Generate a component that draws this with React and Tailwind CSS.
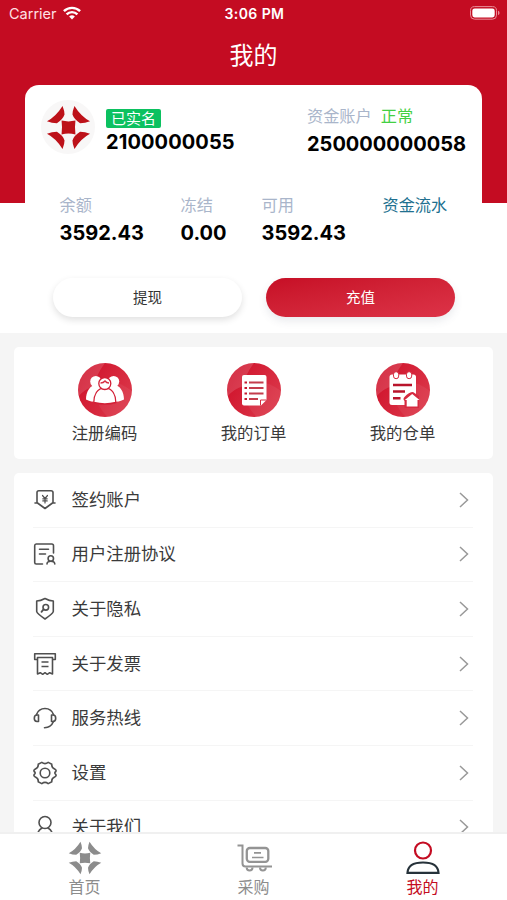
import React from 'react';

const PETAL = 'M-18-65Q-12-50-12-39Q-17-24-35-13Q-50-13-65-19Q-38-33-18-65Z';

function Logo({ className }) {
  return (
    <svg viewBox="-68 -68 136 136" className={className} fill="currentColor">
      <path d={PETAL} />
      <path d={PETAL} transform="scale(-1 1)" />
      <path d={PETAL} transform="scale(1 -1)" />
      <path d={PETAL} transform="scale(-1 -1)" />
      <path d="M-21-21Q0-16 21-21Q18 0 21 21Q0 16-21 21Q-18 0-21-21Z" />
    </svg>
  );
}

function StatusBar() {
  return (
    <div className="grid h-7 grid-cols-3 items-center pl-[9px] pr-[7px] text-[14.5px] text-white">
      <div className="flex items-center gap-[6px]">
        <span className="text-[#ffe0e4]">Carrier</span>
        <svg viewBox="0 0 18 14" className="mb-[2px] h-[14px] w-[18px]" fill="none" stroke="#fff" strokeWidth="2.4">
          <path d="M.9 5.2a11.6 11.6 0 0 1 16.2 0M3.6 8.4a7.6 7.6 0 0 1 10.8 0" />
          <path d="M6.1 10.6a4.2 4.2 0 0 1 5.8 0L9 13.6Z" fill="#fff" stroke="none" />
        </svg>
      </div>
      <span className="pb-[2px] text-center text-[14px] font-semibold tracking-[0.4px] whitespace-nowrap">3:06 PM</span>
      <svg viewBox="0 0 30 14" className="mb-[2px] h-[14px] w-[30px] justify-self-end">
        <rect x=".5" y=".6" width="26" height="12.6" rx="4" fill="none" stroke="#e88d98" />
        <rect x="2.3" y="2.4" width="22.4" height="9" rx="2.3" fill="#fff" />
        <path d="M28 4.8c2 .7 2 3.6 0 4.2Z" fill="#e88d98" />
      </svg>
    </div>
  );
}

function Balance({ label, value, className }) {
  return (
    <div className={className}>
      <div className="text-[16.2px] leading-6 text-[#a9b5ca]">{label}</div>
      <div className="mt-[2px] text-[20px] leading-7 font-bold text-black">{value}</div>
    </div>
  );
}

function Disc({ children, id }) {
  return (
    <svg viewBox="0 0 54 54" className="size-[54px]">
      <defs>
        <linearGradient id={id} x1="0" y1="0.2" x2="1" y2="0.8">
          <stop offset="0" stopColor="#cf1029" />
          <stop offset="1" stopColor="#dc3a4c" />
        </linearGradient>
        <clipPath id={id + 'c'}>
          <circle cx="27" cy="27" r="27" />
        </clipPath>
      </defs>
      <circle cx="27" cy="27" r="27" fill={`url(#${id})`} />
      <g clipPath={`url(#${id}c)`} fill="#fff">
        <path d="M0 0H27Q17 13 17 23Q6 26 0 34Z" opacity=".14" />
        <path d="M17 23Q17 43 30 54H54V28Q35 13 17 23Z" opacity=".06" />
      </g>
      {children}
    </svg>
  );
}

function PeopleIcon() {
  return (
    <Disc id="people">
      <g fill="#fff">
        <circle cx="17.8" cy="18.5" r="5.6" />
        <circle cx="35.6" cy="18.5" r="5.6" />
        <path d="M8 36.5C8 29 12 22 18 22C24 22 27 29 27 38.5C20 39.5 12 39 8 36.5ZM27 38.5C27 29 30 22 36 22C42 22 46 29 46 36.5C42 39 34 39.5 27 38.5Z" />
      </g>
      <g fill="#fff" stroke="#d31f36" strokeWidth="1.3">
        <path d="M15.800 39.500C16 32 19 25 26.800 25S37.600 32 37.800 39.500Q27 42.500 15.800 39.500Z" />
        <circle cx="26.800" cy="20.500" r="6" />
      </g>
      <path d="M22.500 20Q25.500 20 27 18Q28.500 20 31 20" fill="none" stroke="#d72f43" strokeWidth="1.300" />
    </Disc>
  );
}

function OrderIcon() {
  return (
    <Disc id="order">
      <path d="M17 12H37.5Q39.5 12 39.5 14V37L34 42.5H17Q15 42.5 15 40.5V14Q15 12 17 12Z" fill="#fff" />
      <path d="M39.5 37H33.5V42.5" fill="none" stroke="#d62b40" strokeWidth="1" />
      <path d="M17.5 19.5H20M17.5 25H20M17.5 30.5H20M17.5 36H20" stroke="#c5192f" strokeWidth="2" />
      <path d="M22 19.5H36.5M22 25H36.5M22 30.5H36.5M22 36H31" stroke="#c43d4c" strokeWidth="1.8" />
    </Disc>
  );
}

function WarehouseIcon() {
  return (
    <Disc id="warehouse">
      <rect x="13.5" y="11.5" width="26.5" height="30.5" rx="2.5" fill="#fff" />
      <g fill="#fff" stroke="#d52a3f" strokeWidth="1">
        <rect x="17.5" y="8.7" width="5.2" height="7" rx="2.6" />
        <rect x="30.5" y="8.7" width="5.2" height="7" rx="2.6" />
      </g>
      <path d="M17 22H36M17 28.5H29M17 35.2H24.5" stroke="#b9142b" strokeWidth="2.4" />
      <path d="M28.5 45V38Q26.5 36 28.5 34Q33 29 37 29L43 33V45Z" fill="#d62a40" />
      <path d="M36.2 31L43.5 37H41.5V43.5H30.7V37H28.8Z" fill="#fff" />
    </Disc>
  );
}

function LineIcon({ children }) {
  return (
    <svg viewBox="0 0 24 24" className="size-6 shrink-0" fill="none" stroke="#505050" strokeWidth="1.6" strokeLinecap="round" strokeLinejoin="round">
      {children}
    </svg>
  );
}

const ROWS = [
  ['签约账户', <><path d="M4 15V4.500Q4 2.700 5.800 2.700H18Q20 2.700 20 4.500V15M2 15H4.500L12 20.500L19.500 15H22" /><path d="M9.500 7.500L12 10.500L14.500 7.500M12 10.500V15M9.800 10.800H14.200M9.800 12.900H14.200" strokeWidth="1.200" /></>],
  ['用户注册协议', <><path d="M20.500 11V3.700Q20.500 2 18.800 2H3.200Q1.700 2 1.700 3.700V20.500Q1.700 22 3.200 22H9.500M6.500 7.200H15.500M6.500 12H12.500" /><circle cx="17.800" cy="16.500" r="2.700" /><path d="M14 22Q14 19.300 17.800 19.300T21.800 22" /></>],
  ['关于隐私', <><path d="M12 1.500Q16.500 4 20.300 4V14.500Q20 16.500 12 22Q4 16.500 3.700 14.500V4Q7.500 4 12 1.500Z" /><circle cx="12.800" cy="10.300" r="2.800" /><path d="M10.500 12.400L8.500 14.800" strokeWidth="1.800" /></>],
  ['关于发票', <><path d="M4.500 7.500H1.700V1.700H22.300V7.500H19.500M4.500 5.500H19.500V22L16.700 20.700L14.300 22.300L12 20.700L9.700 22.300L7.300 20.700L4.500 22ZM8.500 10H15.500M8.500 14.500H15.500" strokeLinecap="butt" /></>],
  ['服务热线', <><path d="M3.500 8.500A9 9 0 0 1 20.500 8.500M20.500 15.500Q18 21.500 11.500 21.700" /><path d="M5.500 9H4Q1.300 9 1.300 12.200T4 15.500H5.500ZM18.500 9H20Q22.700 9 22.700 12.200T20 15.500H18.500Z" /></>],
  ['设置', <><path d="M8.800 1.400Q12 3.800 15.200 1.400L18.800 3.200Q18.300 6.700 22 8.200Q23.600 9 22.800 10.500Q20.800 12 22.800 13.500Q23.600 15 22 15.800Q18.300 17.300 18.800 20.800L15.200 22.600Q12 20.200 8.800 22.600L5.200 20.800Q5.700 17.300 2 15.800Q.4 15 1.200 13.500Q3.200 12 1.200 10.500Q.4 9 2 8.200Q5.700 6.700 5.200 3.200Z" /><circle cx="12" cy="12" r="4.800" /></>],
  ['关于我们', <><circle cx="12" cy="7.500" r="6" /><path d="M4.500 20Q5 15 9 13M19.500 20Q19 15 15 13" /></>],
];

function Row({ icon, label }) {
  return (
    <div className="flex h-[54.6px] shrink-0 items-center border-b border-[#f5f5f5] text-[#3a3a3a]">
      <LineIcon>{icon}</LineIcon>
      <span className="ml-[14.5px] flex-1 text-[17.4px]">{label}</span>
      <svg viewBox="0 0 10 16" className="mr-[4.5px] h-4 w-[10px]" fill="none" stroke="#999" strokeWidth="1.5">
        <path d="M1 1L8.500 8L1 15" />
      </svg>
    </div>
  );
}

function CartIcon() {
  return (
    <svg viewBox="0 0 36 32" className="h-8 w-9" fill="none" stroke="#949494" strokeWidth="2">
      <path d="M1.500 2.500H6.500V20.500Q6.500 23.500 9.500 23.500H36" />
      <rect x="10.800" y="5" width="21.500" height="13.800" rx="3" strokeWidth="2.300" />
      <path d="M18 9.800H25M16 14.500H27.500" strokeWidth="1.700" />
      <path d="M10.700 24.500A2.900 2.900 0 0 0 16.500 24.500M24 24.500A2.900 2.900 0 0 0 29.800 24.500" />
    </svg>
  );
}

function Tab({ label, children, active }) {
  return (
    <div className={active ? 'flex flex-1 flex-col items-center text-[#c40c22]' : 'flex flex-1 flex-col items-center text-[#8c8c8c]'}>
      <div className="flex h-[41px] items-end">{children}</div>
      <span className="text-[16px] leading-6">{label}</span>
    </div>
  );
}

export default function App() {
  return (
    <div className="flex h-[900px] w-[507px] flex-col overflow-hidden bg-[#f5f5f5] font-['Inter','Noto_Sans_CJK_SC',sans-serif]">
      <header className="h-[333px] shrink-0 bg-[linear-gradient(#c40c22_203px,#fff_203px)]">
        <StatusBar />
        <h1 className="flex h-[57px] items-center justify-center pb-[2px] text-[24px] text-white">我的</h1>
        <section className="mx-[25px] h-[240px] rounded-[14px] bg-white">
          <div className="flex h-[105px] pt-[15px]">
            <div className="ml-[16px] flex size-[54px] items-center justify-center rounded-full bg-[#f8f7f7] text-[#bd1119]">
              <Logo className="size-[45px]" />
            </div>
            <div className="ml-[11px] w-[201px] pt-[9px]">
              <div className="flex h-[19px] w-[55px] items-center justify-center rounded-[2px] bg-[#0cc160] pt-px text-[15px] text-white">已实名</div>
              <div className="text-[20px] leading-7 font-bold tracking-[0.1px] text-black">2100000055</div>
            </div>
            <div className="pt-[4px]">
              <div className="flex gap-[9px] text-[16.2px] leading-6 text-[#a9b5ca]">
                资金账户<span className="text-[#43d043]">正常</span>
              </div>
              <div className="mt-[2px] text-[20px] leading-7 font-bold text-black">250000000058</div>
            </div>
          </div>
          <div className="flex pt-[3px] pl-[34.500px]">
            <Balance label="余额" value="3592.43" className="w-[121px]" />
            <Balance label="冻结" value="0.00" className="w-[81px]" />
            <Balance label="可用" value="3592.43" className="w-[121px]" />
            <div className="text-[16.2px] leading-6 text-[#20708f]">资金流水</div>
          </div>
          <div className="mt-[31px] flex gap-[24px] pl-[28px] text-[14.5px]">
            <button className="h-[39px] w-[189px] rounded-full bg-white text-[#333] shadow-[0_3px_7px_rgba(0,0,0,0.12)]">提现</button>
            <button className="h-[39px] w-[189px] rounded-full bg-linear-to-br from-[#c60d25] to-[#dd3348] text-white shadow-[0_4px_8px_rgba(70,80,110,0.12)]">充值</button>
          </div>
        </section>
      </header>

      <section className="mx-[14px] mt-[14px] flex h-[112px] shrink-0 rounded-[5px] bg-white px-[16px] pt-[16px] text-[16.4px] text-[#3a3a3a]">
        {[
          ['注册编码', <PeopleIcon />],
          ['我的订单', <OrderIcon />],
          ['我的仓单', <WarehouseIcon />],
        ].map(([label, icon]) => (
          <div key={label} className="flex flex-1 flex-col items-center">
            {icon}
            <span className="mt-[4px] leading-6">{label}</span>
          </div>
        ))}
      </section>

      <section className="mx-[14px] mt-[14px] flex min-h-0 flex-1 flex-col overflow-hidden rounded-t-[5px] bg-white pr-[20px] pl-[19px]">
        {ROWS.map(([label, icon]) => (
          <Row key={label} label={label} icon={icon} />
        ))}
      </section>

      <nav className="flex h-[68px] shrink-0 border-t-2 border-[#f0f0f0] bg-white">
        <Tab label="首页">
          <Logo className="size-[34px]" />
        </Tab>
        <Tab label="采购">
          <CartIcon />
        </Tab>
        <Tab label="我的" active>
          <svg viewBox="0 0 34 34" className="h-[34px] w-[34px]" fill="none" strokeWidth="2.2">
            <circle cx="17" cy="9.5" r="8" stroke="#c40c22" />
            <path d="M1.500 31.800Q2 21.500 17 21.500T32.500 31.800Z" stroke="#26323a" />
          </svg>
        </Tab>
      </nav>
    </div>
  );
}
